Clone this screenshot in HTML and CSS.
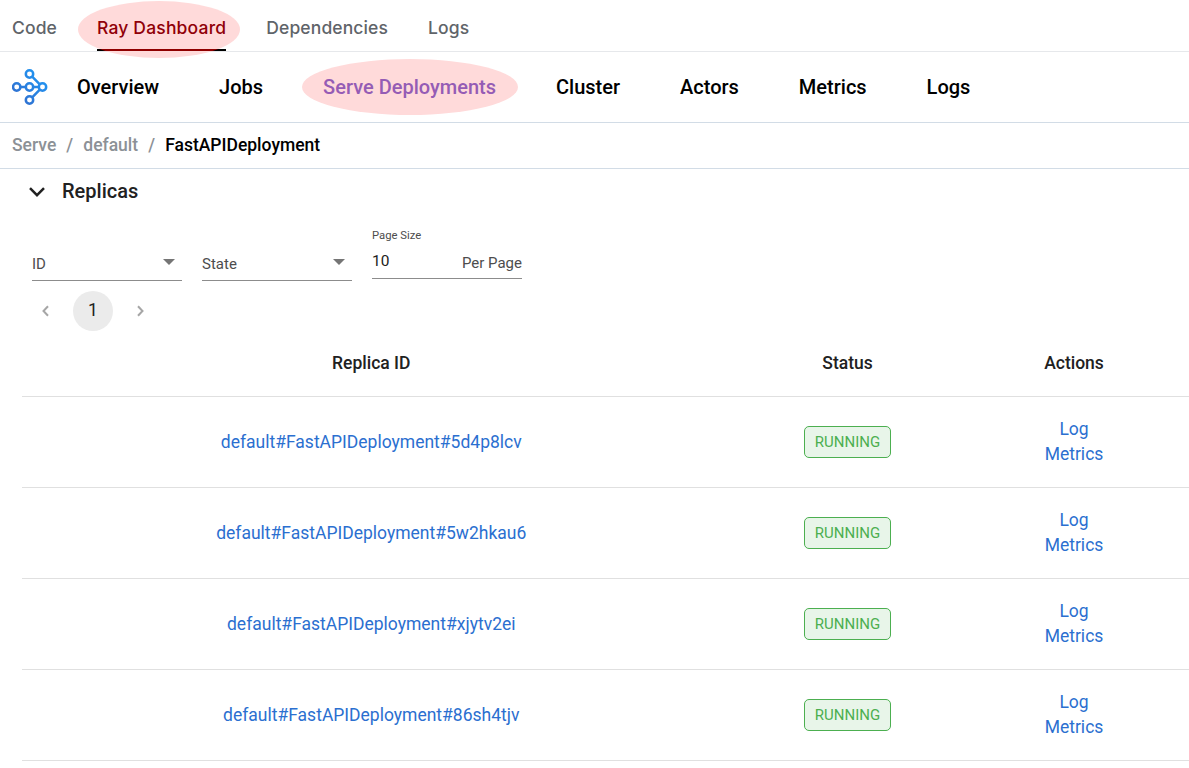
FILE: index.html
```html
<!DOCTYPE html>
<html lang="en">
<head>
<meta charset="utf-8">
<title>Ray Dashboard</title>
<link rel="stylesheet" href="styles.css">
</head>
<body>
<nav class="tabs">
  <a class="tab">Code</a>
  <a class="tab tab-active"><span class="highlight highlight-tab"></span><span class="tab-label">Ray Dashboard</span></a>
  <a class="tab">Dependencies</a>
  <a class="tab">Logs</a>
</nav>
<nav class="main-nav">
  <svg class="logo" width="36" height="36" viewBox="0 0 36 36" fill="none" stroke-width="2.5">
    <defs><linearGradient id="g" gradientUnits="userSpaceOnUse" x1="30" y1="5" x2="6" y2="30"><stop offset="0" stop-color="#2196f3"/><stop offset="1" stop-color="#3070d0"/></linearGradient></defs>
    <g stroke="url(#g)">
      <circle cx="17.5" cy="5" r="3.7"/><circle cx="4.7" cy="18" r="3.7"/><circle cx="17.5" cy="18" r="3.7"/><circle cx="30.5" cy="18" r="3.7"/><circle cx="17.5" cy="31" r="3.7"/>
      <path d="M8.5 18H13.7M21.3 18.01H26.7M20.2 7.7L27.8 15.3M20.2 28.3L27.8 20.7"/>
    </g>
  </svg>
  <a>Overview</a>
  <a>Jobs</a>
  <a class="nav-active"><span class="highlight highlight-nav"></span><span class="nav-label">Serve Deployments</span></a>
  <a>Cluster</a>
  <a>Actors</a>
  <a>Metrics</a>
  <a>Logs</a>
</nav>
<div class="breadcrumb"><span>Serve</span><span class="slash">/</span><span>default</span><span class="slash">/</span><span class="current">FastAPIDeployment</span></div>
<main>
  <h2 class="section-title">
    <svg width="16" height="10" viewBox="0 0 16 10" fill="none" stroke="#212121" stroke-width="2.5"><path d="M1 1.2L8 8.2L15 1.2"/></svg>
    <span>Replicas</span>
  </h2>
  <div class="filters">
    <div class="field select"><span>ID</span><i class="caret"></i></div>
    <div class="field select"><span>State</span><i class="caret"></i></div>
    <div class="field page-size"><label>Page Size</label><div class="page-row"><span class="value">10</span><span class="suffix">Per Page</span></div></div>
  </div>
  <div class="pager">
    <svg width="7" height="12" viewBox="0 0 7 12" fill="none" stroke="#a6a6a6" stroke-width="2"><path d="M6 1.2L1.5 6L6 10.8"/></svg>
    <span class="page">1</span>
    <svg width="7" height="12" viewBox="0 0 7 12" fill="none" stroke="#a6a6a6" stroke-width="2"><path d="M1 1.2L5.5 6L1 10.8"/></svg>
  </div>
  <div class="table">
    <div class="row head"><span>Replica ID</span><span>Status</span><span>Actions</span></div>
    <div class="row"><a>default#FastAPIDeployment#5d4p8lcv</a><span class="badge">RUNNING</span><div class="actions"><a>Log</a><a>Metrics</a></div></div>
    <div class="row"><a>default#FastAPIDeployment#5w2hkau6</a><span class="badge">RUNNING</span><div class="actions"><a>Log</a><a>Metrics</a></div></div>
    <div class="row"><a>default#FastAPIDeployment#xjytv2ei</a><span class="badge">RUNNING</span><div class="actions"><a>Log</a><a>Metrics</a></div></div>
    <div class="row"><a>default#FastAPIDeployment#86sh4tjv</a><span class="badge">RUNNING</span><div class="actions"><a>Log</a><a>Metrics</a></div></div>
  </div>
</main>
</body>
</html>
```
FILE: styles.css
```css
* { box-sizing: border-box; }
body {
  margin: 0;
  height: 768px;
  overflow: hidden;
  background: #fff;
  color: #212121;
  font-family: Roboto, "Liberation Sans", sans-serif;
}
.tabs {
  display: flex;
  gap: 40px;
  height: 52px;
  padding-left: 12px;
  border-bottom: 1px solid #e6e8eb;
  font: 500 17.5px/55px Inter, sans-serif;
  letter-spacing: 0.12px;
  color: #5f6469;
}
.tab { height: 51px; }
.tab-active {
  position: relative;
  border-bottom: 2px solid #000;
  letter-spacing: 0.18px;
  color: #900008;
}
.tab-label, .nav-label { position: relative; }
.highlight {
  position: absolute;
  border-radius: 50%;
  background: #ffdada;
}
.highlight-tab {
  left: -19px;
  top: 1px;
  width: 162px;
  height: 57px;
  background: linear-gradient(#900000, #900000) 19px 48px / 129px 2px no-repeat #ffdada;
}
.main-nav {
  display: flex;
  align-items: center;
  gap: 60px;
  height: 71px;
  padding-left: 12px;
  border-bottom: 1px solid #d2dce6;
  font-size: 20px;
  font-weight: 500;
  color: #000;
}
.logo { margin-right: -31px; }
.nav-active { position: relative; color: #955cb5; }
.highlight-nav {
  left: -21px;
  top: -16px;
  width: 216px;
  height: 56px;
}
.breadcrumb {
  display: flex;
  height: 46px;
  padding-left: 12px;
  border-bottom: 1px solid #d2dce6;
  font-size: 17.5px;
  font-weight: 500;
  line-height: 44px;
  color: #8c9196;
}
.slash { width: 27px; text-align: center; }
.current { color: #000; }
.section-title {
  display: flex;
  align-items: center;
  gap: 17px;
  height: 45px;
  margin: 0;
  padding-left: 29px;
  font-size: 20px;
  font-weight: 500;
}
.section-title span { padding-bottom: 2px; }
.filters {
  display: flex;
  gap: 20px;
  height: 67px;
  padding-left: 32px;
  font-size: 15px;
  color: #4d4d4d;
}
.field { width: 150px; border-bottom: 1px solid #8c8c8c; }
.select {
  display: flex;
  justify-content: space-between;
  align-items: flex-end;
  height: 67px;
  padding: 0 7px 7px 0;
}
.caret {
  margin-bottom: 8px;
  border: 6px solid transparent;
  border-top-color: #757575;
  border-bottom: 0;
}
.page-size { height: 65px; padding-top: 14px; }
.page-size label { display: block; font-size: 11.25px; line-height: 15px; }
.page-row { display: flex; justify-content: space-between; line-height: 26px; margin-top: 7px; }
.value { font-size: 15.5px; color: #212121; line-height: 22px; }
.pager {
  display: flex;
  align-items: center;
  gap: 24px;
  height: 40px;
  margin: 10px 0 0 42px;
}
.page {
  width: 40px;
  height: 40px;
  border-radius: 50%;
  background: #ebebeb;
  font-size: 17.5px;
  line-height: 38px;
  text-align: center;
}
.table { margin: 0 0 0 22px; font-size: 17.5px; }
.row {
  display: grid;
  grid-template-columns: 698.5px 254px 199px;
  align-items: center;
  justify-items: center;
  height: 91px;
  border-bottom: 1px solid #e0e0e0;
}
.head { height: 66px; padding-bottom: 2px; font-weight: 500; }
.row a { color: #2b6fd0; }
.badge {
  width: 87px;
  height: 32px;
  border: 1px solid #4caf50;
  border-radius: 5px;
  background: #e8f5e9;
  color: #4caf50;
  font-size: 15px;
  line-height: 30px;
  text-align: center;
}
.actions {
  display: flex;
  flex-direction: column;
  align-items: center;
  line-height: 25px;
}
```
